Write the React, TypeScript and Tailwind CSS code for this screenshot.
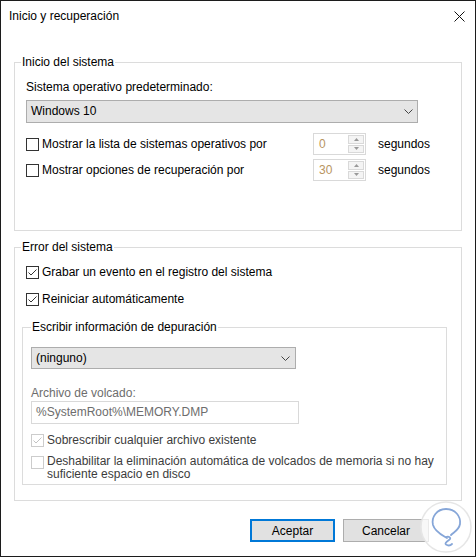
import React from "react";

function Box({ checked = false, disabled = false }: { checked?: boolean; disabled?: boolean }) {
  return (
    <span
      className={
        disabled
          ? "w-[13px] h-[13px] border border-[#cccccc] bg-white flex items-center justify-center shrink-0"
          : "w-[13px] h-[13px] border border-[#333333] bg-white flex items-center justify-center shrink-0"
      }
    >
      {checked && (
        <svg width="11" height="11" viewBox="0 0 11 11">
          <path
            d="M1.5 5.5 L4 8 L9.5 2.5"
            stroke={disabled ? "#c2c2c2" : "#333333"}
            fill="none"
            strokeWidth="1"
          />
        </svg>
      )}
    </span>
  );
}

function Chevron() {
  return (
    <svg width="9" height="5" viewBox="0 0 9 5">
      <path d="M0.5 0.5 L4.5 4.5 L8.5 0.5" stroke="#444444" strokeWidth="1" fill="none" />
    </svg>
  );
}

function Spinner({ value }: { value: string }) {
  return (
    <div className="w-[53px] h-[22px] border border-[#d9d9d9] bg-white flex">
      <div className="flex-1 pl-[5px] leading-[20px] text-[#b8955f]">{value}</div>
      <div className="w-[17px] flex flex-col py-[1px] pr-[1px] gap-[1px]">
        <div className="flex-1 border border-[#d9d9d9] bg-[#f4f4f4] flex items-center justify-center">
          <svg width="5" height="3" viewBox="0 0 5 3">
            <path d="M0 3 L2.5 0 L5 3 Z" fill="#999999" />
          </svg>
        </div>
        <div className="flex-1 border border-[#d9d9d9] bg-[#f4f4f4] flex items-center justify-center">
          <svg width="5" height="3" viewBox="0 0 5 3">
            <path d="M0 0 L2.5 3 L5 0 Z" fill="#999999" />
          </svg>
        </div>
      </div>
    </div>
  );
}

export default function App() {
  return (
    <div className="w-[476px] h-[557px] bg-white border border-[#1c1c1c] relative font-['Liberation_Sans',Arial,sans-serif] text-[12px] leading-[15px] text-black overflow-hidden">
      {/* Title bar */}
      <div className="h-[30px] flex items-center justify-between pl-[8px] pr-[10px]">
        <span className="text-[12px]">Inicio y recuperación</span>
        <svg width="11" height="11" viewBox="0 0 11 11">
          <path d="M0.5 0.5 L10.5 10.5 M10.5 0.5 L0.5 10.5" stroke="#111" strokeWidth="1" />
        </svg>
      </div>

      <div className="px-[13px]">
        {/* Inicio del sistema */}
        <div className="mt-[31px] h-[169px] border border-[#dcdcdc] flex flex-col">
          <div className="self-start -mt-[8px] ml-[6px] px-[1px] bg-white h-[15px]">Inicio del sistema</div>
          <div className="pl-[11px] flex flex-col">
            <div className="mt-[10px] h-[15px]">Sistema operativo predeterminado:</div>
            <div className="mt-[5px] w-[392px] h-[23px] bg-[#e5e5e5] border border-[#adadad] flex items-center justify-between pl-[4px] pr-[4px]">
              <span>Windows 10</span>
              <Chevron />
            </div>
            <div className="mt-[10px] flex items-center h-[22px]">
              <div className="w-[287px] flex items-center gap-[3px]">
                <Box />
                <span>Mostrar la lista de sistemas operativos por</span>
              </div>
              <Spinner value="0" />
              <span className="ml-[12px]">segundos</span>
            </div>
            <div className="mt-[4px] flex items-center h-[22px]">
              <div className="w-[287px] flex items-center gap-[3px]">
                <Box />
                <span>Mostrar opciones de recuperación por</span>
              </div>
              <Spinner value="30" />
              <span className="ml-[12px]">segundos</span>
            </div>
          </div>
        </div>

        {/* Error del sistema */}
        <div className="mt-[16px] h-[254px] border border-[#dcdcdc] flex flex-col">
          <div className="self-start -mt-[8px] ml-[6px] px-[1px] bg-white h-[15px]">Error del sistema</div>
          <div className="pl-[11px] mt-[10px] h-[15px] flex items-center gap-[3px]">
            <Box checked />
            <span>Grabar un evento en el registro del sistema</span>
          </div>
          <div className="pl-[11px] mt-[12px] h-[15px] flex items-center gap-[3px]">
            <Box checked />
            <span>Reiniciar automáticamente</span>
          </div>

          {/* Inner group */}
          <div className="mt-[20px] ml-[7px] w-[425px] h-[158px] border border-[#dcdcdc] flex flex-col">
            <div className="self-start -mt-[8px] ml-[8px] px-[1px] bg-white h-[15px]">
              Escribir información de depuración
            </div>
            <div className="pl-[8px] flex flex-col">
              <div className="mt-[12px] w-[265px] h-[22px] bg-[#e5e5e5] border border-[#adadad] flex items-center justify-between pl-[4px] pr-[5px]">
                <span>(ninguno)</span>
                <Chevron />
              </div>
              <div className="mt-[17px] h-[15px] text-[#6d6d6d]">Archivo de volcado:</div>
              <div className="w-[268px] h-[23px] border border-[#d9d9d9] flex items-center pl-[4px] text-[#6d6d6d]">
                %SystemRoot%\MEMORY.DMP
              </div>
              <div className="mt-[9px] h-[15px] flex items-center gap-[3px] text-[#3c3c3c]">
                <Box checked disabled />
                <span>Sobrescribir cualquier archivo existente</span>
              </div>
              <div className="mt-[7px] flex items-start gap-[3px] text-[#3c3c3c]">
                <div className="pt-[1px]">
                  <Box disabled />
                </div>
                <span className="leading-[13px] w-[398px]">
                  Deshabilitar la eliminación automática de volcados de memoria si no hay suficiente espacio en disco
                </span>
              </div>
            </div>
          </div>
        </div>

        {/* Buttons */}
        <div className="mt-[18px] flex justify-end gap-[8px] pr-[33px]">
          <button className="w-[85px] h-[23px] bg-[#e1e1e1] border-2 border-[#0078d7] text-black leading-none">
            Aceptar
          </button>
          <button className="w-[86px] h-[23px] bg-[#e1e1e1] border border-[#adadad] text-black leading-none">
            Cancelar
          </button>
        </div>
      </div>

      {/* Watermark logo */}
      <div className="absolute left-[419px] top-[500px] w-[52px] h-[52px] pointer-events-none">
        <svg width="52" height="52" viewBox="0 0 52 52">
          <circle cx="26" cy="26" r="25" fill="rgba(255,255,255,0.75)" stroke="#e6e6e6" strokeWidth="1.5" />
          <path
            d="M27 37 C22 34 15 31 13 24 C11 16 17 8 26 8 C35 8 41 15 40 23 C39 29 34 31 31 34"
            stroke="#86a6d8"
            strokeWidth="1.8"
            fill="none"
            strokeLinecap="round"
          />
          <path
            d="M26 36 C29 35 32 37 29 39 C26 41 24 43 27 44 C29 45 31 44 32 43"
            stroke="#86a6d8"
            strokeWidth="1.8"
            fill="none"
            strokeLinecap="round"
          />
        </svg>
      </div>
    </div>
  );
}
